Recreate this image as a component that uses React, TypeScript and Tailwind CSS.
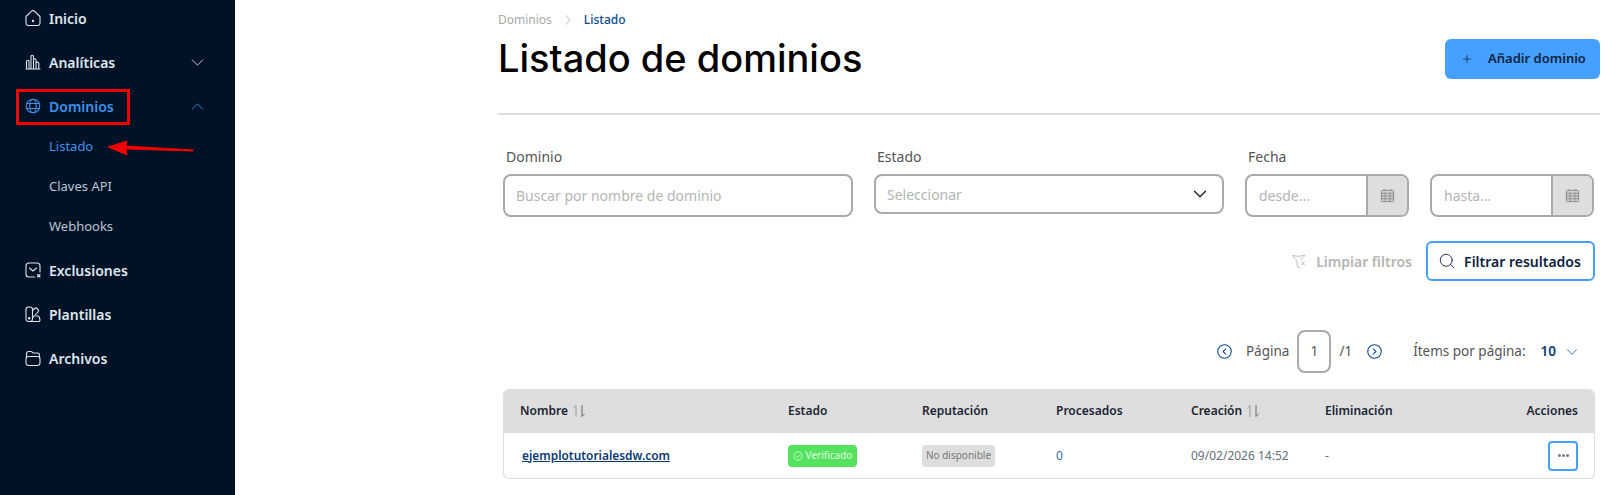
import { ChevronDown, ChevronRight, ChevronUp, Plus, Search } from 'lucide-react';
import type { ReactNode } from 'react';

const font = "font-['Noto_Sans',sans-serif]";

function Svg({ children, className = 'w-[16px] h-[16px]' }: { children: ReactNode; className?: string }) {
  return (
    <svg viewBox="0 0 16 16" fill="none" stroke="currentColor" strokeWidth="1.100" strokeLinecap="round" strokeLinejoin="round" className={className}>
      {children}
    </svg>
  );
}

const HomeIcon = () => (
  <Svg>
    <path d="M1 6.500 6.600 1.200a2 2 0 0 1 2.800 0L15 6.500V13a2.500 2.500 0 0 1-2.500 2.500h-9A2.500 2.500 0 0 1 1 13z" />
    <circle cx="8" cy="11" r=".6" fill="currentColor" />
  </Svg>
);
const BarsIcon = () => (
  <Svg>
    <path d="M1 15h14M1.500 15V7.500a1 1 0 0 1 2.500 0V15M6 15V2.500a1.200 1.200 0 0 1 2.500 0V15M8.500 15V6a1 1 0 0 1 2.500 0v9M11 15V9.500a1 1 0 0 1 2.800 0V15" />
  </Svg>
);
const GlobeIcon = () => (
  <Svg>
    <circle cx="8" cy="8" r="6.800" />
    <ellipse cx="8" cy="8" rx="3.200" ry="6.800" />
    <path d="M1.800 5.500h12.400M1.800 10.500h12.400" />
  </Svg>
);
const MailXIcon = () => (
  <Svg>
    <path d="M9.500 15H4a3 3 0 0 1-3-3V4a3 3 0 0 1 3-3h8a3 3 0 0 1 3 3v6" />
    <path d="M4.500 6 8 9l3.500-3" />
    <path d="m12.500 12.500 2.500 2.500m0-2.500L12.500 15" />
  </Svg>
);
const SwatchIcon = () => (
  <Svg>
    <rect x="1" y="1" width="6.500" height="14.500" rx="2.500" />
    <path d="M7.500 4.500 9.500 2.500a1.800 1.800 0 0 1 2.500 0l1 1a1.800 1.800 0 0 1 0 2.500L7.500 12" />
    <path d="M6.500 15.500h7a1.500 1.500 0 0 0 1.500-1.500l-.7-2.500A1.500 1.500 0 0 0 12.500 10H11" />
    <circle cx="4.200" cy="12.300" r=".7" fill="currentColor" />
  </Svg>
);
const FolderIcon = () => (
  <Svg>
    <path d="M1.500 7V3.500a2 2 0 0 1 2-2h2.300a2 2 0 0 1 1.500.7l.7.8H12.500a2 2 0 0 1 2 2V7" />
    <rect x="1" y="6.500" width="14" height="9" rx="2.500" />
  </Svg>
);
const CalendarIcon = () => (
  <svg viewBox="0 0 16 16" fill="none" stroke="#888" strokeWidth="1" className="w-[15px] h-[17px]">
    <rect x="1.500" y="2.500" width="13" height="12" rx="1" fill="#d4d4d4" />
    <path d="M1.500 5.500h13M1.500 8.500h13M1.500 11.500h13M5.500 5.500v9M10.500 5.500v9M4.500 1v2M11.500 1v2" />
  </svg>
);
const FilterXIcon = () => (
  <svg viewBox="0 0 16 16" fill="none" stroke="#bbb" strokeWidth="1" strokeLinecap="round" strokeLinejoin="round" className="w-[16px] h-[16px]">
    <path d="M2 2.500c3 1 8 1 12-.5-1 2-3 3.500-4.500 4.500M2 2.500c0 2 3 4 4 5.500l.5 6 2.500 1" />
    <path d="m10.500 9 3 3m0-3-3 3" />
  </svg>
);
const SortIcon = () => (
  <svg viewBox="0 0 14 14" fill="none" stroke="#999" strokeWidth="1" strokeLinecap="round" strokeLinejoin="round" className="w-[14px] h-[14px]">
    <path d="M4 12.500V1.500L1.500 4" />
    <path d="M10 1.500v11l2.500-2.500" stroke="#666" />
  </svg>
);
const RoundChevron = ({ dir }: { dir: 'l' | 'r' }) => (
  <svg viewBox="0 0 14 14" fill="none" stroke="#0b4a8f" strokeWidth="1" strokeLinecap="round" strokeLinejoin="round" className="w-[15px] h-[15px]">
    <circle cx="7" cy="7" r="6.300" />
    <path d={dir === 'l' ? 'M8 4.700 5.700 7 8 9.300' : 'M6 4.700 8.300 7 6 9.300'} />
  </svg>
);

function NavItem({ icon, label, active, chevron }: { icon: ReactNode; label: string; active?: boolean; chevron?: 'up' | 'down' }) {
  return (
    <div className={`h-[44px] flex items-center pl-[25px] pr-[27px] ${active ? 'text-[#3f90ea]' : 'text-[#dfe6ee]'}`}>
      <span className="w-[24px] flex shrink-0">{icon}</span>
      <span className="text-[14px] font-semibold flex-1">{label}</span>
      {chevron === 'down' && <ChevronDown className="w-[21px] h-[21px]" strokeWidth={1} />}
      {chevron === 'up' && <ChevronUp className="w-[21px] h-[21px]" strokeWidth={1} />}
    </div>
  );
}

function SubItem({ label, active }: { label: string; active?: boolean }) {
  return <div className={`h-[40px] flex items-center pl-[49px] text-[13px] ${active ? 'text-[#3f90ea]' : 'text-[#b9c6d4]'}`}>{label}</div>;
}

function DateField({ placeholder }: { placeholder: string }) {
  return (
    <div className="w-[164px] h-[43px] border-2 border-[#aaaaaa] rounded-[8px] flex overflow-hidden">
      <span className="flex-1 pl-[12px] flex items-center text-[14px] text-[#b5b5b5]">{placeholder}</span>
      <span className="w-[41px] bg-[#dedede] border-l-2 border-[#aaaaaa] flex items-center justify-center">
        <CalendarIcon />
      </span>
    </div>
  );
}

export default function App() {
  return (
    <div className={`relative w-[1617px] h-[495px] overflow-hidden flex bg-white ${font}`}>
      <aside className="w-[235px] shrink-0 bg-[#001226] -mt-[4px]">
        <NavItem icon={<HomeIcon />} label="Inicio" />
        <NavItem icon={<BarsIcon />} label="Analíticas" chevron="down" />
        <NavItem icon={<GlobeIcon />} label="Dominios" active chevron="up" />
        <div className="-mt-[1px] mb-[1px]">
          <SubItem label="Listado" active />
          <SubItem label="Claves API" />
          <SubItem label="Webhooks" />
        </div>
        <NavItem icon={<MailXIcon />} label="Exclusiones" />
        <NavItem icon={<SwatchIcon />} label="Plantillas" />
        <NavItem icon={<FolderIcon />} label="Archivos" />
      </aside>

      <main className="flex-1 pl-[263px] pr-[17px]">
        <div className="h-[113px] border-b-2 border-[#dedede] box-content flex justify-between">
          <div>
            <div className="pt-[10px] h-[30px] flex items-center text-[12px] text-[#aaaaaa]">
              <span>Dominios</span>
              <ChevronRight className="w-[18px] h-[18px] mx-[7px]" strokeWidth={1} />
              <span className="text-[#0b4a8f] font-medium">Listado</span>
            </div>
            <h1 className="mt-[6px] font-['Inter',sans-serif] text-[38px] leading-[44px] font-medium text-black">Listado de dominios</h1>
          </div>
          <button className="mt-[39px] w-[155px] h-[40px] pl-[2px] rounded-[6px] bg-[#45a0ff] flex items-center justify-center gap-[15px] text-[13px] font-semibold text-[#0c2340]">
            <Plus className="w-[12px] h-[12px]" strokeWidth={1.500} />
            Añadir dominio
          </button>
        </div>

        <div className="ml-[5px] w-[1092px]">
          <div className="mt-[29px] flex gap-[21px]">
            <div className="w-[350px]">
              <div className="pl-[3px] h-[24px] text-[14px] leading-[26px] text-[#555555]">Dominio</div>
              <div className="mt-[6px] h-[43px] border-2 border-[#aaaaaa] rounded-[8px] flex items-center pl-[11px] text-[14px] text-[#b5b5b5]">Buscar por nombre de dominio</div>
            </div>
            <div className="w-[350px]">
              <div className="pl-[3px] h-[24px] text-[14px] leading-[26px] text-[#555555]">Estado</div>
              <div className="mt-[6px] h-[40px] border-2 border-[#aaaaaa] rounded-[8px] flex items-center justify-between pl-[11px] pr-[11px] text-[14px] text-[#b5b5b5]">
                Seleccionar
                <ChevronDown className="w-[22px] h-[22px] text-[#222]" strokeWidth={1.500} />
              </div>
            </div>
            <div className="flex gap-[21px]">
              <div>
                <div className="pl-[3px] h-[24px] text-[14px] leading-[26px] text-[#555555]">Fecha</div>
                <div className="mt-[6px]"><DateField placeholder="desde..." /></div>
              </div>
              <div className="pt-[30px]"><DateField placeholder="hasta..." /></div>
            </div>
          </div>

          <div className="mt-[24px] flex justify-end items-center">
            <span className="flex items-center gap-[9px] text-[14px] font-semibold text-[#b5b5b5]">
              <FilterXIcon />
              Limpiar filtros
            </span>
            <button className="ml-[14px] w-[169px] h-[40px] pr-[2px] border-2 border-[#45a0ff] rounded-[6px] flex items-center justify-center gap-[8px] text-[14px] font-semibold text-[#0c2340]">
              <Search className="w-[18px] h-[18px]" strokeWidth={1.200} />
              Filtrar resultados
            </button>
          </div>

          <div className="mt-[49px] flex justify-end items-center text-[13.500px] text-[#555555] pr-[14px]">
            <RoundChevron dir="l" />
            <span className="ml-[14px]">Página</span>
            <span className="ml-[8px] w-[34px] h-[43px] border-2 border-[#aaaaaa] rounded-[8px] flex items-center justify-center">1</span>
            <span className="ml-[8px]">/1</span>
            <span className="ml-[15px] flex"><RoundChevron dir="r" /></span>
            <span className="ml-[31px]">Ítems por página:</span>
            <span className="ml-[15px] font-semibold text-[#0b3a75]">10</span>
            <ChevronDown className="ml-[7px] w-[18px] h-[18px] text-[#0b4a8f]" strokeWidth={1} />
          </div>

          <div className="mt-[16px] rounded-[6px] border border-t-0 border-[#dedede] text-[12px]">
            <div className="h-[44px] bg-[#dedede] rounded-t-[6px] grid grid-cols-[268px_134px_134px_135px_134px_1fr_auto] items-center pl-[16px] pr-[16px] font-semibold text-[#1a2433]">
              <span className="flex items-center gap-[4px]">Nombre <SortIcon /></span>
              <span>Estado</span>
              <span>Reputación</span>
              <span>Procesados</span>
              <span className="flex items-center gap-[4px]">Creación <SortIcon /></span>
              <span>Eliminación</span>
              <span>Acciones</span>
            </div>
            <div className="h-[45px] grid grid-cols-[268px_134px_134px_135px_134px_1fr_auto] items-center pl-[16px] pr-[16px] text-[12px] text-[#666e78]">
              <a className="pl-[2px] text-[11.900px] font-semibold text-[#0b3a75] underline">ejemplotutorialesdw.com</a>
              <span>
                <span className="inline-flex items-center gap-[3px] h-[22px] w-[69px] justify-center rounded-[4px] bg-[#55e35f] text-[10px] text-white/80">
                  <svg viewBox="0 0 12 12" fill="none" stroke="currentColor" strokeWidth="1" className="w-[10px] h-[10px]"><circle cx="6" cy="6" r="5" /><path d="m3.800 6 1.600 1.600 2.800-3" /></svg>
                  Verificado
                </span>
              </span>
              <span>
                <span className="inline-flex items-center justify-center h-[22px] w-[73px] rounded-[4px] bg-[#dedede] text-[10px] text-[#777777]">No disponible</span>
              </span>
              <span className="text-[#2f6aa5]">0</span>
              <span>09/02/2026 14:52</span>
              <span>-</span>
              <span className="flex justify-end">
                <span className="w-[30px] h-[30px] border-2 border-[#45a0ff] rounded-[4px] flex items-center justify-center gap-[1px]">
                  <span className="w-[3px] h-[3px] rounded-full bg-[#777]" />
                  <span className="w-[3px] h-[3px] rounded-full bg-[#777]" />
                  <span className="w-[3px] h-[3px] rounded-full bg-[#777]" />
                </span>
              </span>
            </div>
          </div>
        </div>
      </main>

      {/* red annotation over the sidebar */}
      <div className="absolute left-[16px] top-[89px] w-[114px] h-[36px] border-[3px] border-[#f00000]" />
      <svg viewBox="0 0 90 20" className="absolute left-[106px] top-[138px] w-[90px] h-[20px]">
        <path d="M2 9 21 3 20 8 87 12 87 13 20 11 21 17z" fill="#f00000" stroke="#f00000" strokeLinejoin="round" />
      </svg>
    </div>
  );
}
